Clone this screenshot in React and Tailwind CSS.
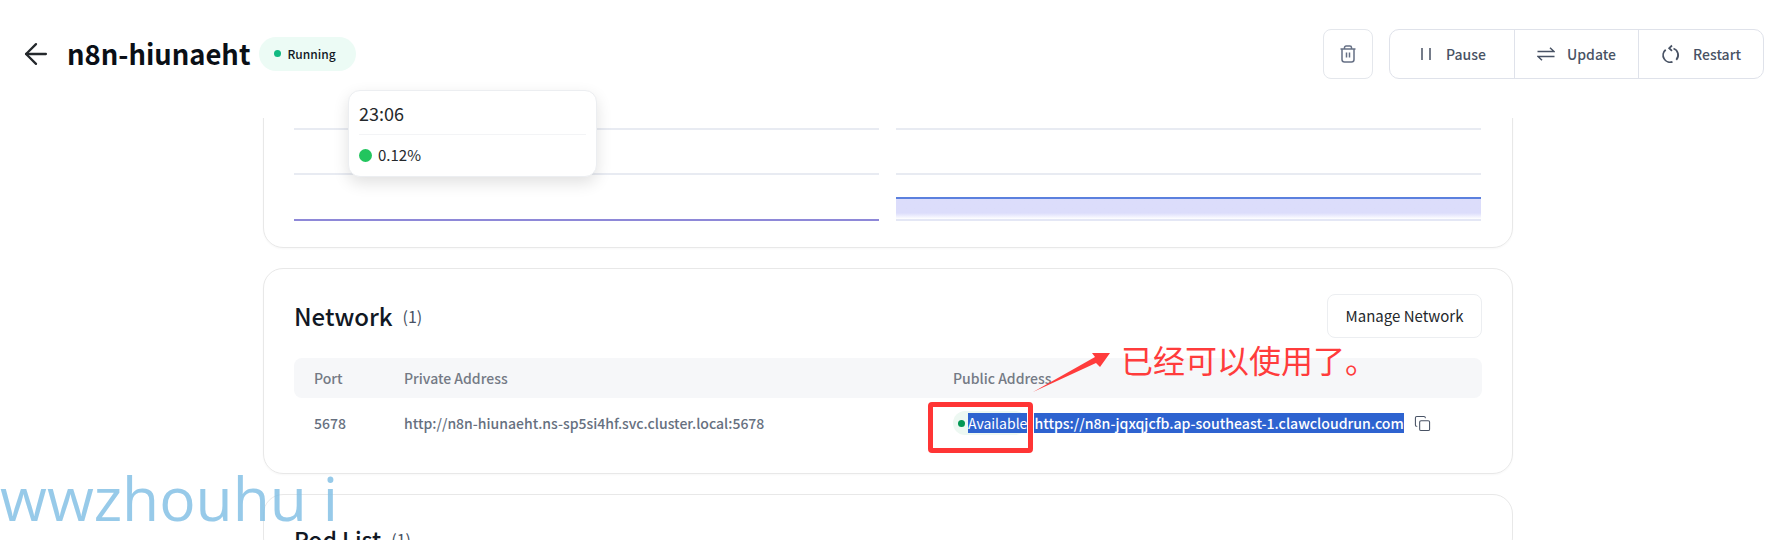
import { ArrowLeft, Copy } from "lucide-react";

const FONT = "font-['Noto_Sans_CJK_SC','Noto_Sans',sans-serif]";

const TrashIcon = () => (
    <svg width="20" height="20" viewBox="0 0 20 20" fill="none" stroke="#667085" strokeWidth="1.5">
        <path d="M2.5 5h15" />
        <path d="M6.5 5V3.6c0-.9.7-1.6 1.6-1.6h3.8c.9 0 1.6.7 1.6 1.6V5" />
        <path d="M4 5v10.5c0 1.4 1.1 2.5 2.5 2.5h7c1.4 0 2.5-1.1 2.5-2.5V5" />
        <path d="M8.5 8.5v5M11.5 8.5v5" />
    </svg>
);

const PauseIcon = () => (
    <svg width="16" height="16" viewBox="0 0 16 16" fill="none" stroke="#485264" strokeWidth="1.5">
        <path d="M4 2v12M12 2v12" />
    </svg>
);

const UpdateIcon = () => (
    <svg width="18" height="18" viewBox="0 0 18 18" fill="none" stroke="#485264" strokeWidth="1.5">
        <path d="M0.5 6.5h16.5L13 2.8" />
        <path d="M17.5 11.5H1l4 3.7" />
    </svg>
);

const RestartIcon = () => (
    <svg width="20" height="20" viewBox="0 0 20 20" fill="none" stroke="#485264" strokeWidth="1.8">
        <path d="M12.5 4.5a7 7 0 0 1 2.8 11.3" />
        <path d="M11.5 17.8a7 7 0 0 1-6.8-12" />
        <path d="M11 1.5 8.2 4.2 11 6.8" />
    </svg>
);

const ActionButton = ({ icon, label, className }) => (
    <button className={`flex items-center justify-center gap-3 text-sm font-medium text-[#485264] ${className}`}>
        {icon}
        {label}
    </button>
);

const CpuTooltip = () => (
    <div className="absolute left-[348px] top-[90px] z-20 h-[87px] w-[249px] rounded-xl border border-[#eceef1] bg-white px-[10px] shadow-[0_6px_16px_rgba(0,0,0,0.12)]">
        <div className="h-[44px] border-b border-[#f3f4f6] pt-[7px] text-lg leading-[30px] text-[#24282c]">23:06</div>
        <div className="flex items-center gap-[6px] pt-[9px] text-[15px] text-[#24282c]">
            <span className="h-[13px] w-[13px] rounded-full bg-[#22c55e]"></span>
            0.12%
        </div>
    </div>
);

const Annotations = () => (
    <>
        <div className="absolute left-[1121px] top-[334px] z-30 whitespace-nowrap text-[32px] leading-[50px] text-[#ff3c3c]">
            已经可以使用了。
        </div>
        <svg className="absolute left-[1030px] top-[348px] z-30" width="84" height="48" viewBox="0 0 84 48">
            <path d="M3 44 65 9 62 5 80 5 70 19 66 15Z" fill="#ff3c3c" />
        </svg>
        <div className="absolute left-[928px] top-[402px] z-30 h-[51px] w-[105px] rounded-[4px] border-[5px] border-[#ff3535]"></div>
        <div className="absolute left-0 top-[457px] z-30 whitespace-nowrap font-['Open_Sans',sans-serif] text-[60.5px] leading-[82px] text-[#7dbde3]/80">
            wwzhouhu i
        </div>
    </>
);

const App = () => {
    return (
        <div className={`relative flex h-[540px] w-[1779px] flex-col overflow-hidden bg-white ${FONT}`}>
            <header className="relative z-10 flex h-[118px] shrink-0 items-start justify-between bg-white pl-[19px] pr-[15px] pt-[29px]">
                <div className="flex h-[49px] items-center">
                    <ArrowLeft size={34} strokeWidth={1.6} className="text-[#24282c]" />
                    <h1 className="ml-[14px] text-[27.4px] font-semibold text-[#0a0f16]">n8n-hiunaeht</h1>
                    <div className="ml-[9px] flex h-[34px] w-[97px] items-center gap-[6px] rounded-full bg-[#ecfbf5] pl-[15px] text-xs font-medium text-[#111824]">
                        <span className="h-[7px] w-[7px] rounded-full bg-[#10b981]"></span>
                        Running
                    </div>
                </div>
                <div className="flex gap-4">
                    <button className="flex h-[50px] w-[50px] items-center justify-center rounded-lg border border-[#e4e7ec]">
                        <TrashIcon />
                    </button>
                    <div className="flex h-[50px] w-[375px] rounded-[10px] border border-[#dfe2ea]">
                        <ActionButton icon={<PauseIcon />} label="Pause" className="w-[124px]" />
                        <ActionButton icon={<UpdateIcon />} label="Update" className="w-[125px] border-x border-[#dfe2ea]" />
                        <ActionButton icon={<RestartIcon />} label="Restart" className="flex-1" />
                    </div>
                </div>
            </header>

            <CpuTooltip />

            <main className="flex flex-1 flex-col items-center gap-5 overflow-hidden">
                <section className="-mt-5 ml-[-3px] w-[1250px] shrink-0 rounded-[20px] border border-[#e8e8e8] px-[30px] pb-[26px] shadow-[0_1px_2px_rgba(0,0,0,0.03)]">
                    <div className="grid grid-cols-2 gap-[17px] pr-px">
                        <div>
                            <div className="h-[31px] border-b-2 border-[#e8ebf2]"></div>
                            <div className="h-[45px] border-b-2 border-[#e8ebf2]"></div>
                            <div className="h-[46px] border-b-2 border-[#8e88d8]"></div>
                        </div>
                        <div>
                            <div className="h-[31px] border-b-2 border-[#e8ebf2]"></div>
                            <div className="h-[45px] border-b-2 border-[#e8ebf2]"></div>
                            <div className="h-[46px] border-b-2 border-[#e4e7f5] pt-[22px]">
                                <div className="h-[22px] border-t-2 border-[#5b80de] bg-gradient-to-b from-[#dcddfb] via-[#dcddfb] via-70% to-white"></div>
                            </div>
                        </div>
                    </div>
                </section>

                <section className="ml-[-3px] h-[206px] w-[1250px] shrink-0 rounded-[20px] border border-[#e8e8e8] px-[30px] pt-[25px] shadow-[0_1px_2px_rgba(0,0,0,0.03)]">
                    <div className="flex h-[44px] items-center justify-between">
                        <div className="flex items-center gap-[10px]">
                            <span className="text-2xl font-medium text-[#111824]">Network</span>
                            <span className="text-base text-[#485264]">(1)</span>
                        </div>
                        <button className="h-[44px] w-[155px] rounded-lg border border-[#eceef1] text-[15px] text-[#24282c]">
                            Manage Network
                        </button>
                    </div>
                    <div className="mt-5 flex h-10 items-center rounded-lg bg-[#f6f7f9] text-sm font-medium text-[#747a85]">
                        <div className="w-[110px] pl-5">Port</div>
                        <div className="w-[549px]">Private Address</div>
                        <div>Public Address</div>
                    </div>
                    <div className="flex h-[50px] items-center text-sm font-medium text-[#667080]">
                        <div className="w-[110px] pl-5">5678</div>
                        <div className="w-[549px]">http://n8n-hiunaeht.ns-sp5si4hf.svc.cluster.local:5678</div>
                        <div className="flex items-center">
                            <div className="flex h-6 items-center rounded-full bg-[#edf8f2] pl-[5px]">
                                <span className="mr-[3px] h-[7px] w-[7px] rounded-full bg-[#039855]"></span>
                                <span className="bg-[#2e63d0] font-normal leading-5 text-white">Available</span>
                            </div>
                            <span className="ml-[7px] bg-[#2e63d0] text-[14.1px] leading-5 text-white">
                                https://n8n-jqxqjcfb.ap-southeast-1.clawcloudrun.com
                            </span>
                            <Copy size={17} strokeWidth={1.5} className="ml-[10px] text-[#485264]" />
                        </div>
                    </div>
                </section>

                <section className="ml-[-3px] w-[1250px] shrink-0 rounded-[20px] border border-[#e8e8e8] px-[30px] pt-[27px]">
                    <div className="flex items-center gap-[10px]">
                        <span className="text-[23px] font-medium text-[#111824]">Pod List</span>
                        <span className="text-base text-[#485264]">(1)</span>
                    </div>
                </section>
            </main>

            <Annotations />
        </div>
    );
};

export default App;
